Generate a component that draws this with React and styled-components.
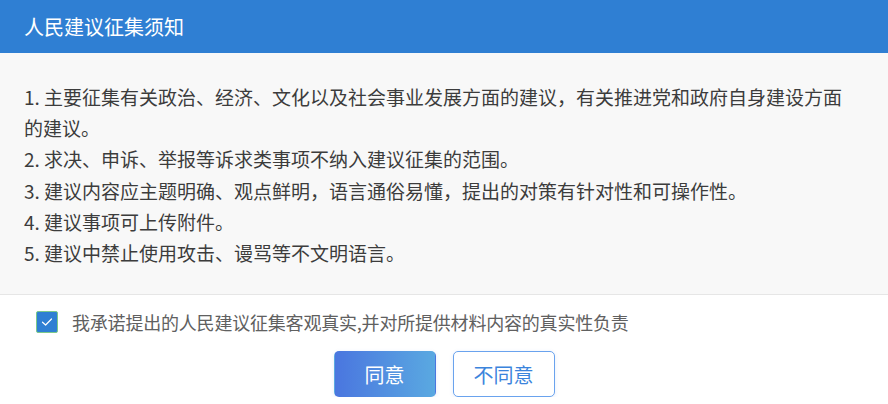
import React, { useState } from "react";
import styled, { createGlobalStyle } from "styled-components";

const GlobalStyle = createGlobalStyle`
  body {
    margin: 0;
    background: #ffffff;
    font-family: "Noto Sans CJK SC", "Noto Sans", sans-serif;
  }
`;

const Dialog = styled.div`
  width: 888px;
  display: flex;
  flex-direction: column;
`;

const Header = styled.div`
  height: 53px;
  background: #2f7fd3;
  color: #ffffff;
  display: flex;
  align-items: center;
  padding: 0 24px 1px;
  font-size: 20px;
  box-sizing: border-box;
`;

const Body = styled.div`
  background: #f8f8f8;
  padding: 28px 40px 26px 24px;
  border-bottom: 1px solid #e6e6e6;
  color: #3c3c3c;
  font-size: 19px;
  line-height: 31.2px;
`;

const Item = styled.div``;

const Footer = styled.div`
  padding: 14px 0 0;
  display: flex;
  flex-direction: column;
`;

const Agree = styled.label`
  display: flex;
  align-items: center;
  gap: 14px;
  padding-left: 36px;
  font-size: 18px;
  letter-spacing: -0.2px;
  color: #606060;
  cursor: pointer;
`;

const Box = styled.span`
  width: 22px;
  height: 22px;
  box-sizing: border-box;
  border-radius: 2px;
  border: 1px solid ${(p) => (p.$checked ? "#7cc98a" : "#c0c4cc")};
  background: ${(p) => (p.$checked ? "#2f7fd3" : "#ffffff")};
  display: flex;
  align-items: center;
  justify-content: center;
`;

const Buttons = styled.div`
  margin-top: 16px;
  display: flex;
  justify-content: center;
  gap: 17px;
`;

const Button = styled.button`
  width: 102px;
  height: 46px;
  box-sizing: border-box;
  border-radius: 5px;
  font-family: inherit;
  font-size: 20px;
  cursor: pointer;
  border: 1px solid ${(p) => (p.$primary ? "transparent" : "#6aa3ee")};
  color: ${(p) => (p.$primary ? "#ffffff" : "#3b84dc")};
  background: ${(p) =>
    p.$primary ? "linear-gradient(90deg, #4a76df 0%, #5aa9e1 100%)" : "#ffffff"};
  box-shadow: 0 1px 4px rgba(60, 110, 200, 0.12);
`;

const items = [
  "1. 主要征集有关政治、经济、文化以及社会事业发展方面的建议，有关推进党和政府自身建设方面的建议。",
  "2. 求决、申诉、举报等诉求类事项不纳入建议征集的范围。",
  "3. 建议内容应主题明确、观点鲜明，语言通俗易懂，提出的对策有针对性和可操作性。",
  "4. 建议事项可上传附件。",
  "5. 建议中禁止使用攻击、谩骂等不文明语言。",
];

export default function App() {
  const [checked, setChecked] = useState(true);
  return (
    <>
      <GlobalStyle />
      <Dialog>
        <Header>人民建议征集须知</Header>
        <Body>
          {items.map((t) => (
            <Item key={t}>{t}</Item>
          ))}
        </Body>
        <Footer>
          <Agree onClick={() => setChecked(!checked)}>
            <Box $checked={checked}>
              {checked && (
                <svg width="14" height="14" viewBox="0 0 14 14">
                  <path
                    d="M2.5 7.2 L5.6 10 L11.5 4"
                    fill="none"
                    stroke="#ffffff"
                    strokeWidth="1.2"
                    strokeLinecap="round"
                    strokeLinejoin="round"
                  />
                </svg>
              )}
            </Box>
            我承诺提出的人民建议征集客观真实,并对所提供材料内容的真实性负责
          </Agree>
          <Buttons>
            <Button $primary>同意</Button>
            <Button>不同意</Button>
          </Buttons>
        </Footer>
      </Dialog>
    </>
  );
}
